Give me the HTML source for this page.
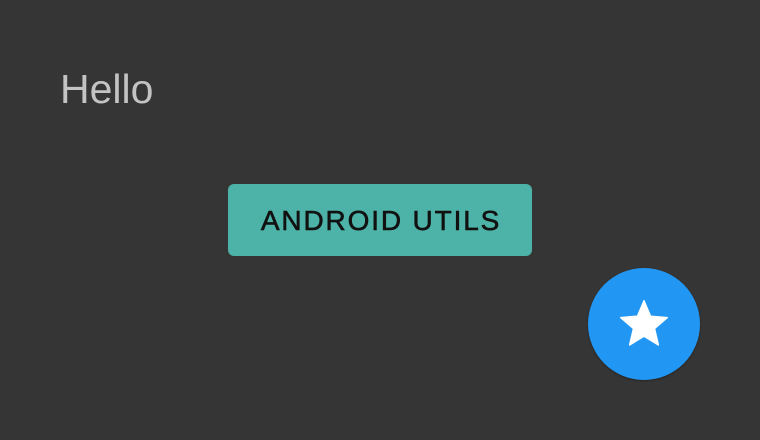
<!DOCTYPE html>
<html><head><style>
html,body{margin:0;padding:0;}
body{width:760px;height:440px;background:#353535;position:relative;overflow:hidden;font-family:"Liberation Sans",sans-serif;}
.hello{position:absolute;left:60px;top:64px;font-size:41px;color:#c3c3c3;line-height:50px;}
.btn{position:absolute;left:228px;top:184px;width:304px;height:72px;background:#4db3a8;border-radius:6px;display:flex;align-items:center;justify-content:center;}
.btn span{font-size:28px;letter-spacing:1.85px;color:#111;-webkit-text-stroke:0.6px #111;padding-left:2px;position:relative;top:1px;}
.fab{position:absolute;left:588px;top:268px;width:112px;height:112px;border-radius:50%;background:#2196f3;box-shadow:0 1px 2px rgba(0,0,0,.3);}
.fab svg{position:absolute;left:28px;top:28px;}
</style></head><body>
<div class="hello">Hello</div>
<div class="btn"><span>ANDROID UTILS</span></div>
<div class="fab"><svg width="56" height="56" viewBox="0 0 24 24"><path fill="#fff" stroke="#fff" stroke-width="0.6" stroke-linejoin="round" d="M12 17.27L18.18 21l-1.64-7.03L22 9.24l-7.19-.61L12 2 9.19 8.63 2 9.24l5.46 4.73L5.82 21z"/></svg></div>
</body></html>
